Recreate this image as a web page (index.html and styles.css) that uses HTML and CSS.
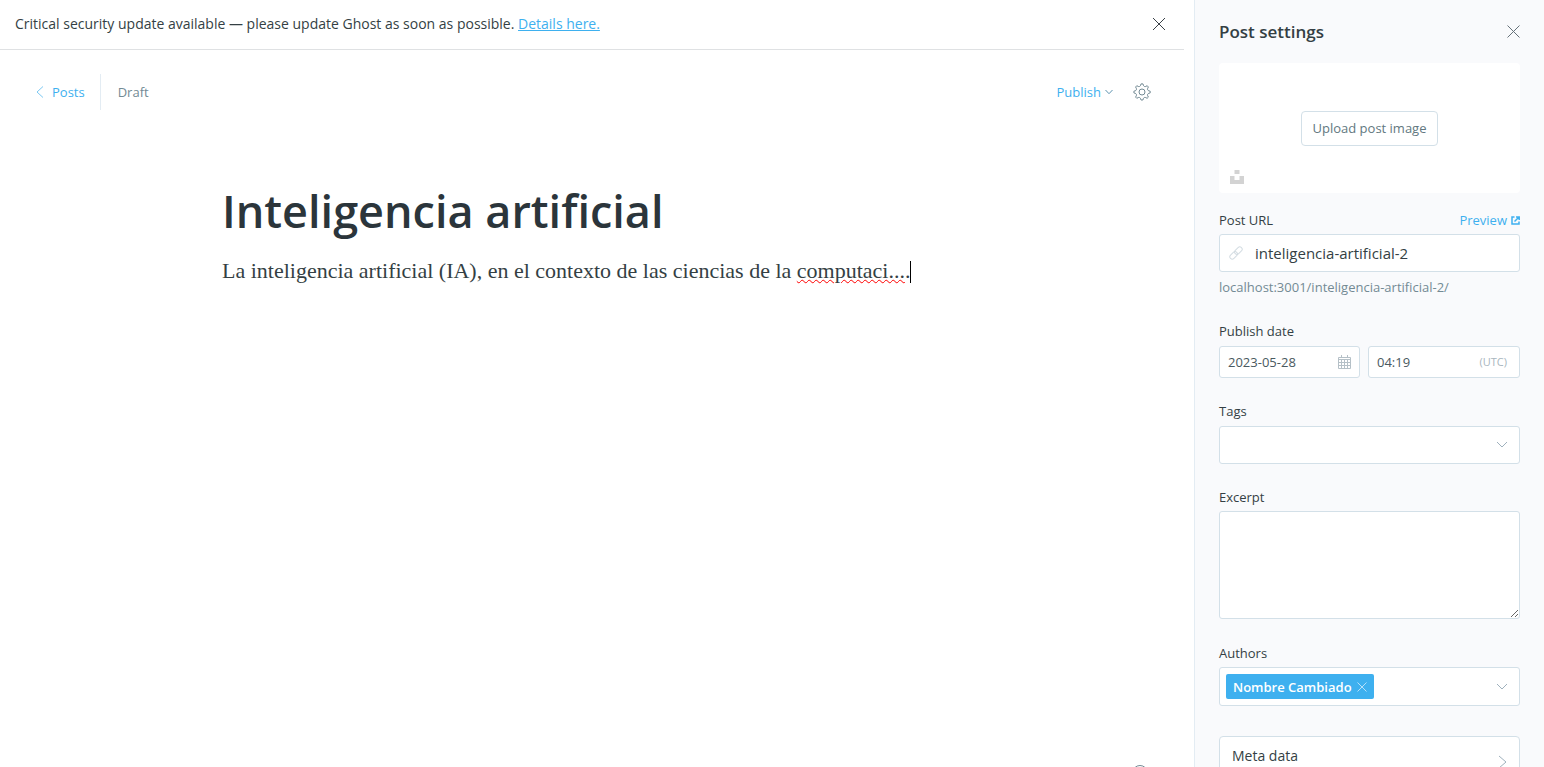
FILE: index.html
```html
<!DOCTYPE html>
<html lang="en">
<head>
<meta charset="utf-8">
<title>Post editor</title>
<link rel="stylesheet" href="styles.css">
</head>
<body>
<div class="app">
  <main class="main">
    <aside class="banner">
      <p class="banner-text">Critical security update available — please update Ghost as soon as possible. <a class="banner-link" href="#">Details here.</a></p>
      <button class="icon-button" type="button" aria-label="Dismiss">
        <svg width="14" height="14" viewBox="0 0 14 14" fill="none" stroke="#394047"><path d="M1 1l12 12M13 1L1 13"/></svg>
      </button>
    </aside>
    <header class="toolbar">
      <a class="back" href="#">
        <svg width="8" height="12" viewBox="0 0 8 12" fill="none" stroke="#7cc8f2"><path d="M7 .5L1 6l6 5.500"/></svg>
        Posts
      </a>
      <span class="status">Draft</span>
      <div class="actions">
        <button class="publish" type="button">Publish
          <svg width="8" height="6" viewBox="0 0 8 6" fill="none" stroke="#5d93b0"><path d="M.5 1L4 4.700 7.500 1"/></svg>
        </button>
        <button class="icon-button" type="button" aria-label="Settings">
          <svg width="18" height="18" viewBox="0 0 18 18" fill="none" stroke="#738a94" stroke-linejoin="round"><circle cx="9" cy="9" r="3"/><path d="M7.600 2.300L8 .900h2l.4 1.400c.4 1.200 1.500 1.600 2.500 1.100l1.300-.7 1.200 1.300-.7 1.300c-.5 1-.1 2.100 1.100 2.500l1.400.4v1.700l-1.400.4c-1.200.4-1.600 1.500-1.100 2.500l.7 1.300-1.300 1.200-1.300-.7c-1-.5-2.100-.1-2.500 1.100L9.900 17H8l-.4-1.300c-.4-1.200-1.500-1.600-2.500-1.100l-1.300.7-1.200-1.200.7-1.300c.5-1 .1-2.100-1.100-2.500L.900 9.900V8.200l1.300-.4c1.200-.4 1.600-1.500 1.100-2.500L2.600 4l1.200-1.300 1.300.7c1 .5 2.100.1 2.500-1.100z"/></svg>
        </button>
      </div>
    </header>
    <section class="editor">
      <input class="title" type="text" aria-label="Post title" value="Inteligencia artificial" spellcheck="false">
      <div class="body" contenteditable="true" role="textbox" aria-label="Post content" spellcheck="false">La inteligencia artificial (IA), en el contexto de las ciencias de la <span class="misspelled">computaci...</span>.<span class="caret"></span></div>
    </section>
    <button class="help" type="button" aria-label="Help"></button>
  </main>

  <aside class="panel">
    <header class="panel-head">
      <h2 class="panel-title">Post settings</h2>
      <button class="icon-button" type="button" aria-label="Close">
        <svg width="13" height="13" viewBox="0 0 13 13" fill="none" stroke="#657179"><path d="M.5.500l12 12M12.500.500l-12 12"/></svg>
      </button>
    </header>

    <div class="uploader">
      <button class="upload" type="button">Upload post image</button>
      <button class="unsplash" type="button" aria-label="Unsplash">
        <svg width="14" height="14" viewBox="0 0 14 14" fill="#d3d3d3"><path d="M4.500 0h5v4h-5zM0 6h4.500v4h5V6H14v8H0z"/></svg>
      </button>
    </div>

    <div class="field">
      <div class="label-row">
        <label class="label" for="url">Post URL</label>
        <a class="preview" href="#">Preview
          <svg width="9" height="9" viewBox="0 0 9 9" fill="none" stroke="#3eb0ef" stroke-width="1.500"><path d="M3.500 1H1v7h7V5.500M3.500 5.500L7.500 1.500M5 .900h3.200V4"/></svg>
        </a>
      </div>
      <div class="control url">
        <svg width="14" height="14" viewBox="0 0 14 14" fill="none" stroke="#d3dce2"><g transform="rotate(-45 7 7)"><rect x="-.7" y="4.600" width="8.700" height="4.800" rx="2.400"/><rect x="6" y="4.600" width="8.700" height="4.800" rx="2.400"/></g></svg>
        <input class="input" id="url" type="text" value="inteligencia-artificial-2" spellcheck="false">
      </div>
      <p class="hint">localhost:3001/inteligencia-artificial-2/</p>
    </div>

    <div class="field roomy">
      <label class="label" for="date">Publish date</label>
      <div class="date-row">
        <div class="control small">
          <input class="input" id="date" type="text" value="2023-05-28">
          <svg width="13" height="14" viewBox="0 0 13 14" fill="none" stroke="#b5c0c7"><path d="M.5 2.500h12v11H.500zM0 4.500h13M0 7.500h13M0 10.500h13M3.500 4v9M6.500 4v9M9.500 4v9M3.500 0v3M9.500 0v3"/></svg>
        </div>
        <div class="control small">
          <input class="input" type="text" aria-label="Publish time" value="04:19">
          <span class="zone">(UTC)</span>
        </div>
      </div>
    </div>

    <div class="field roomy">
      <label class="label" for="tags">Tags</label>
      <div class="control select">
        <select class="input" id="tags"><option></option></select>
        <svg width="12" height="8" viewBox="0 0 12 8" fill="none" stroke="#9fb1bd"><path d="M1 1l5 5 5-5"/></svg>
      </div>
    </div>

    <div class="field">
      <label class="label" for="excerpt">Excerpt</label>
      <textarea class="control excerpt" id="excerpt"></textarea>
    </div>

    <div class="field">
      <label class="label" for="authors">Authors</label>
      <div class="control authors">
        <span class="token">Nombre Cambiado
          <button class="icon-button" type="button" aria-label="Remove Nombre Cambiado">
            <svg width="10" height="10" viewBox="0 0 10 10" fill="none" stroke="#b5e0f9"><path d="M.5.500l9 9M9.500.500l-9 9"/></svg>
          </button>
        </span>
        <input class="input" id="authors" type="text">
        <svg width="12" height="8" viewBox="0 0 12 8" fill="none" stroke="#9fb1bd"><path d="M1 1l5 5 5-5"/></svg>
      </div>
    </div>

    <button class="nav-item" type="button">
      <span class="nav-title">Meta data</span>
      <svg width="9" height="14" viewBox="0 0 9 14" fill="none" stroke="#9fb1bd"><path d="M1 1l7 6-7 6"/></svg>
    </button>
  </aside>
</div>
</body>
</html>
```
FILE: styles.css
```css
* { box-sizing: border-box; }

body {
  margin: 0;
  background: #fff;
  color: #343f44;
  font-family: "Open Sans", "Noto Sans", sans-serif;
  font-size: 13px;
  line-height: 20px;
}

p, h2 { margin: 0; }
a { text-decoration: none; }
svg { display: block; flex: none; }

button, input, select, textarea {
  margin: 0;
  padding: 0;
  border: 0;
  outline: 0;
  background: none;
  color: inherit;
  font: inherit;
}

.icon-button { display: flex; flex: none; }

.app {
  display: flex;
  height: 100vh;
  overflow: hidden;
}

.main {
  flex: 1;
  min-width: 0;
  margin-right: 10px;
}

.banner {
  display: flex;
  align-items: center;
  justify-content: space-between;
  height: 50px;
  padding: 0 18px 2px 15px;
  border-bottom: 1px solid #dfe1e3;
}

.banner-text { font-size: 14px; }
.banner-link { color: #3eb0ef; text-decoration: underline; }

.toolbar {
  display: flex;
  align-items: center;
  height: 36px;
  margin: 24px 33px 0 36px;
}

.back {
  display: flex;
  align-items: center;
  gap: 8px;
  height: 100%;
  padding-right: 15px;
  border-right: 1px solid #e3ecf3;
  color: #3eb0ef;
}

.status { padding-left: 17px; color: #738a94; }

.actions {
  display: flex;
  align-items: center;
  gap: 20px;
  margin-left: auto;
}

.publish {
  display: flex;
  align-items: center;
  gap: 4px;
  color: #3eb0ef;
}

.editor {
  width: 100%;
  max-width: 740px;
  margin: 66px auto 0;
}

.title {
  width: 100%;
  height: 68px;
  color: #2b353b;
  font-size: 45px;
  font-weight: 600;
}

.body {
  margin-top: 11px;
  outline: 0;
  color: #343f44;
  font-family: "Liberation Serif", serif;
  font-size: 22px;
  line-height: 32px;
}

.misspelled { text-decoration: underline wavy #f00 1px; }

.caret {
  display: inline-block;
  height: 22px;
  border-left: 1px solid #000;
  vertical-align: text-bottom;
}

.help {
  position: fixed;
  right: 396px;
  bottom: -14px;
  width: 16px;
  height: 16px;
  border: 1px solid #738a94;
  border-radius: 50%;
}

.panel {
  flex: none;
  width: 350px;
  padding: 20px 24px 0;
  border-left: 1px solid #e3ecf3;
  background: #f9fafc;
  overflow: hidden;
}

.panel-head {
  display: flex;
  align-items: center;
  justify-content: space-between;
  height: 23px;
}

.panel-title { font-size: 17px; font-weight: 600; }

.uploader {
  position: relative;
  display: flex;
  align-items: center;
  justify-content: center;
  height: 130px;
  margin: 20px 0 17px;
  border-radius: 4px;
  background: #fff;
}

.upload {
  height: 35px;
  padding: 0 11px;
  border: 1px solid #d3e0e8;
  border-radius: 4px;
  color: #627880;
}

.unsplash {
  position: absolute;
  left: 11px;
  bottom: 9px;
}

.field {
  display: flex;
  flex-direction: column;
  gap: 4px;
  margin-bottom: 24px;
}

.roomy { gap: 5px; margin-bottom: 23px; }

.label { font-weight: 500; }

.label-row {
  display: flex;
  justify-content: space-between;
}

.preview {
  display: flex;
  align-items: center;
  gap: 4px;
  color: #3eb0ef;
}

.control {
  display: flex;
  align-items: center;
  border: 1px solid #d3e0e8;
  border-radius: 3px;
  background: #fff;
}

.input {
  flex: 1;
  min-width: 0;
  width: 0;
  appearance: none;
}

.url {
  gap: 12px;
  height: 38px;
  padding-left: 9px;
  font-size: 15px;
}

.hint { margin-top: 1px; color: #738a94; }

.date-row {
  display: grid;
  grid-template-columns: 141fr 152fr;
  gap: 8px;
}

.small { height: 32px; padding: 0 8px; }
.small:last-child { padding-right: 12px; }

.small .input { color: #4a5960; }

.zone { color: #a9b6be; font-size: 11px; }

.select, .authors { padding-right: 11px; }
.select { height: 38px; }
.authors { height: 39px; padding-left: 6px; }

.excerpt {
  width: 100%;
  height: 108px;
  resize: vertical;
}

.token {
  display: flex;
  align-items: center;
  gap: 5px;
  height: 25px;
  padding: 0 7px;
  border-radius: 2px;
  background: #3eb0ef;
  color: #fff;
  font-weight: 600;
}

.nav-item {
  display: flex;
  align-items: center;
  justify-content: space-between;
  width: 100%;
  height: 52px;
  margin-top: 30px;
  padding: 0 12px;
  border: 1px solid #d3e0e8;
  border-radius: 4px 4px 0 0;
  background: #fff;
}

.nav-title {
  align-self: flex-start;
  padding-top: 9px;
  font-size: 14px;
  font-weight: 500;
}
```
